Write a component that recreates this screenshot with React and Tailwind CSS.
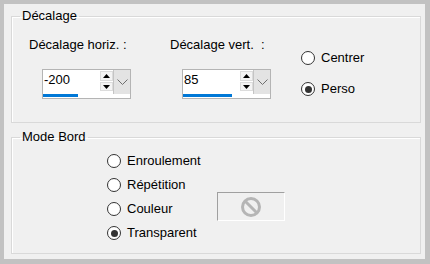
import React from 'react';

const Radio = ({ label, checked, className = '' }) => (
    <div className={`flex items-center gap-[6px] h-[16px] ${className}`}>
        <span className="w-[14px] h-[14px] rounded-full border border-[#333333] bg-white flex items-center justify-center shrink-0">
            {checked && <span className="w-[7px] h-[7px] rounded-full bg-[#333333]" />}
        </span>
        <span>{label}</span>
    </div>
);

const SpinEdit = ({ value, bar }) => (
    <div className="w-[89px] h-[30px] border border-[#b4b4b4] bg-white flex flex-col">
        <div className="flex h-[24px]">
            <div className="flex-1 pl-[1px] pt-[2px]">{value}</div>
            <div className="w-[13px] flex flex-col gap-[1px] pt-[1px]">
                <div className="h-[10px] bg-[#f4f4f4] border border-[#dcdcdc] flex items-center justify-center">
                    <svg width="7" height="4" viewBox="0 0 7 4"><path d="M0 4 L3.5 0 L7 4 Z" fill="#000" /></svg>
                </div>
                <div className="h-[9px] bg-[#f4f4f4] border border-[#dcdcdc] flex items-center justify-center">
                    <svg width="7" height="4" viewBox="0 0 7 4"><path d="M0 0 L3.5 4 L7 0 Z" fill="#000" /></svg>
                </div>
            </div>
            <div className="w-[17px] bg-[#e3e3e3] border-l border-[#c4c4c4] flex items-center justify-center">
                <svg width="11" height="6" viewBox="0 0 11 6"><path d="M0.5 0.5 L5.5 5.5 L10.5 0.5" fill="none" stroke="#6e6e6e" strokeWidth="1" /></svg>
            </div>
        </div>
        <div className="flex-1 flex">
            <div className="h-[3px] bg-[#0078d7]" style={{ width: bar }} />
        </div>
    </div>
);

const App = () => {
    return (
        <div className="w-[430px] h-[264px] bg-[#c2c2c2] pt-[4px] pl-[4px] pr-[5px] pb-[5px] font-['Liberation_Sans',Arial,sans-serif] text-[13px] leading-[16px] text-black">
            <div className="w-full h-full bg-[#f0f0f0] flex flex-col pl-[7px] pr-[4px]">

                <fieldset className="mt-[4px] h-[115px] border border-[#d9d9d9] shadow-[inset_1px_1px_0_#ffffff]">
                    <legend className="ml-[8px] px-[2px] leading-[16px]">Décalage</legend>
                    <div className="flex pl-[17px] pt-[13px]">
                        <div className="w-[141px] flex flex-col">
                            <span>Décalage horiz. :</span>
                            <div className="ml-[13px] mt-[16px]">
                                <SpinEdit value="-200" bar={35} />
                            </div>
                        </div>
                        <div className="w-[131px] flex flex-col">
                            <span>Décalage vert.&nbsp; :</span>
                            <div className="ml-[12px] mt-[16px]">
                                <SpinEdit value="85" bar={49} />
                            </div>
                        </div>
                        <div className="flex flex-col gap-[15px] mt-[13px]">
                            <Radio label="Centrer" />
                            <Radio label="Perso" checked />
                        </div>
                    </div>
                </fieldset>

                <fieldset className="mt-[6px] h-[125px] border border-[#d9d9d9] shadow-[inset_1px_1px_0_#ffffff]">
                    <legend className="ml-[8px] px-[2px] leading-[16px]">Mode Bord</legend>
                    <div className="flex flex-col gap-[8px] pl-[95px] pt-[8px]">
                        <Radio label="Enroulement" />
                        <Radio label="Répétition" />
                        <div className="flex h-[16px]">
                            <div className="w-[110px]">
                                <Radio label="Couleur" />
                            </div>
                            <div className="self-start -mt-[9px] w-[68px] h-[29px] border-t border-l border-[#a0a0a0] border-r border-b border-r-white border-b-white flex items-center justify-center">
                                <svg width="22" height="22" viewBox="0 0 22 22">
                                    <circle cx="11" cy="11" r="8.5" fill="none" stroke="#b5b5b5" strokeWidth="3" />
                                    <path d="M5 5 L17 17" stroke="#b5b5b5" strokeWidth="3" />
                                </svg>
                            </div>
                        </div>
                        <Radio label="Transparent" checked />
                    </div>
                </fieldset>

            </div>
        </div>
    );
};

export default App;
